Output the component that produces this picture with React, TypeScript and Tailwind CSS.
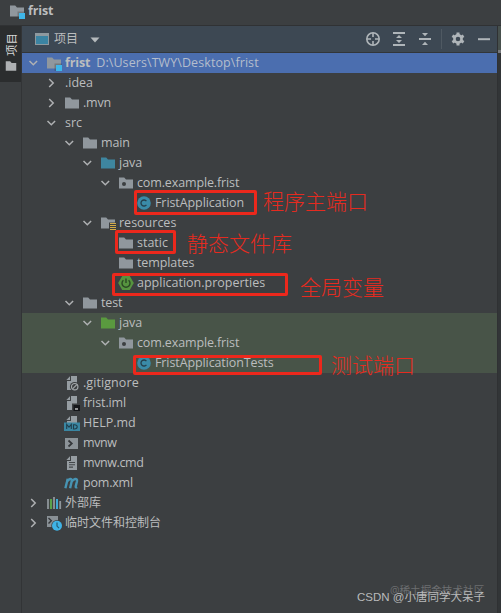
import React from "react";

const folderPath = "M1 2.5h5.2l1.8 2h7v9H1z";

const FolderIcon = ({ color = "#90979d", kind = "" }) => (
  <svg width="16" height="16" viewBox="0 0 16 16">
    <path d={folderPath} fill={color} />
    {kind === "module" && (
      <>
        <path d="M8.5 8.5H16V16H8.5z" fill="#3d4042" fillOpacity=".35" />
        <path d="M10 10h6v6h-6z" fill="#3fb6e8" />
      </>
    )}
    {kind === "package" && <circle cx="6" cy="9" r="2" fill="#3c3f41" />}
    {kind === "resources" && (
      <>
        <path d="M9 7.5h7V16H9z" fill="#3c3f41" />
        <path d="M10 8.5h6M10 10.5h6M10 12.5h6M10 14.5h6" stroke="#d3aa48" strokeWidth="1" />
      </>
    )}
  </svg>
);

const ClassIcon = () => (
  <svg width="16" height="16" viewBox="0 0 16 16">
    <circle cx="8" cy="8" r="6.8" fill="#3a8ba8" />
    <path d="M10.4 9.8a3 3 0 1 1 0-3.6" fill="none" stroke="#243f4b" strokeWidth="1.3" />
  </svg>
);

const SpringIcon = () => (
  <svg width="16" height="16" viewBox="0 0 16 16">
    <path d="M4.2 1h7.6L15.8 8l-4 7H4.2L.2 8z" fill="#56943f" />
    <path d="M5.4 5.2a4 4 0 1 0 5.2 0M8 3.5V8" fill="none" stroke="#2b4824" strokeWidth="1.4" />
  </svg>
);

const FileIcon = ({ kind = "" }) => (
  <svg width="16" height="16" viewBox="0 0 16 16">
    <path d="M7 1h6v14H3V6h4z" fill="#969da2" />
    <path d="M6 1.2V5H2.4z" fill="#969da2" />
    {kind === "ignore" && (
      <>
        <circle cx="10.7" cy="11.7" r="4.8" fill="#3c3f41" />
        <circle cx="10.7" cy="11.7" r="3.2" fill="none" stroke="#a3a8ab" strokeWidth="1.2" />
        <path d="M8.6 13.8l4.2-4.2" stroke="#a3a8ab" strokeWidth="1.2" />
      </>
    )}
    {kind === "iml" && (
      <>
        <path d="M8 8.5h8V16H8z" fill="#3c3f41" />
        <path d="M9.5 10H16v6H9.5z" fill="#15171a" />
        <path d="M11 14h3" stroke="#e5e5e5" strokeWidth="1.2" />
      </>
    )}
    {kind === "md" && (
      <>
        <path d="M0 7.5h16V16H0z" fill="#3a86a2" />
        <path
          d="M2.7 14V9.5L5 12.2l2.3-2.7V14M9.5 9.7V14h1c3.6 0 3.6-4.3 0-4.3z"
          fill="none"
          stroke="#203e4c"
          strokeWidth="1.1"
        />
      </>
    )}
    {kind === "text" && (
      <path d="M5 7.5h6M5 9.8h6M5 12.1h4" stroke="#44484b" strokeWidth="1.1" />
    )}
  </svg>
);

const ShellIcon = () => (
  <svg width="16" height="16" viewBox="0 0 16 16">
    <path d="M1 3h13v11H1z" fill="#8c9398" />
    <path d="M4.5 5.5l3.3 3-3.3 3" fill="none" stroke="#34373a" strokeWidth="1.7" />
  </svg>
);

const MavenIcon = () => (
  <svg width="16" height="16" viewBox="0 0 16 16">
    <path
      d="M1.4 13.2L3.7 3.7M2.9 7C4.4 3.6 8.4 2.8 7.7 6.2L6.1 13.2M7.5 7C9.2 3.6 13.7 2.8 13 6.2l-1.3 5.2c-.3 1.2.5 1.2 1.5.7"
      fill="none"
      stroke="#4794b3"
      strokeWidth="2.4"
    />
  </svg>
);

const LibraryIcon = () => (
  <svg width="16" height="16" viewBox="0 0 16 16">
    <path d="M2 4v10M8 2v12M14.2 6v8" stroke="#8f969b" strokeWidth="1.8" />
    <path d="M5 4v10" stroke="#5ba14a" strokeWidth="2.2" />
    <path d="M11 4v10" stroke="#3ea9d4" strokeWidth="2" />
  </svg>
);

const ScratchIcon = () => (
  <svg width="16" height="16" viewBox="0 0 16 16" overflow="visible">
    <path d="M1 1h11v11H1z" fill="#899095" />
    <path d="M2.5 3l2.8 2.7-2.8 2.7" fill="none" stroke="#34373a" strokeWidth="1.4" />
    <circle cx="11" cy="10.8" r="5.7" fill="#3c3f41" />
    <circle cx="11" cy="10.8" r="5" fill="#3fb3e6" />
    <path d="M11 7.5v3.6l2 2" fill="none" stroke="#245d76" strokeWidth="1.2" />
  </svg>
);

const Chevron = ({ open = false }) => (
  <svg width="16" height="16" viewBox="0 0 16 16" fill="none" stroke="#afb1b3" strokeWidth="1.5">
    {open ? <path d="M4.5 6l3.8 3.8L12.1 6" /> : <path d="M6.2 4l4 4-4 4" />}
  </svg>
);

type Node = {
  name: string;
  depth: number;
  arrow?: "open" | "closed";
  icon?: React.ReactNode;
  bg?: string;
  text?: string;
};

const nodes: Node[] = [
  { name: ".idea", depth: 1, arrow: "closed" },
  { name: ".mvn", depth: 1, arrow: "closed", icon: <FolderIcon />, text: "tracking-[-0.2px]" },
  { name: "src", depth: 1, arrow: "open" },
  { name: "main", depth: 2, arrow: "open", icon: <FolderIcon />, text: "tracking-[-0.1px]" },
  { name: "java", depth: 3, arrow: "open", icon: <FolderIcon color="#3e86a0" /> },
  { name: "com.example.frist", depth: 4, arrow: "open", icon: <FolderIcon kind="package" />, text: "tracking-[-0.13px]" },
  { name: "FristApplication", depth: 5, icon: <ClassIcon />, text: "tracking-[-0.08px]" },
  { name: "resources", depth: 3, arrow: "open", icon: <FolderIcon kind="resources" /> },
  { name: "static", depth: 4, icon: <FolderIcon /> },
  { name: "templates", depth: 4, icon: <FolderIcon />, text: "tracking-[-0.1px]" },
  { name: "application.properties", depth: 4, icon: <SpringIcon /> },
  { name: "test", depth: 2, arrow: "open", icon: <FolderIcon />, text: "tracking-[-0.15px]" },
  { name: "java", depth: 3, arrow: "open", icon: <FolderIcon color="#5a9a3f" />, bg: "bg-[#485448]" },
  {
    name: "com.example.frist",
    depth: 4,
    arrow: "open",
    icon: <FolderIcon kind="package" />,
    bg: "bg-[#485448]",
    text: "tracking-[-0.13px]",
  },
  {
    name: "FristApplicationTests",
    depth: 5,
    icon: <ClassIcon />,
    bg: "bg-[#485448]",
    text: "tracking-[-0.1px]",
  },
  { name: ".gitignore", depth: 2, icon: <FileIcon kind="ignore" />, text: "tracking-[0.08px]" },
  { name: "frist.iml", depth: 2, icon: <FileIcon kind="iml" />, text: "tracking-[-0.1px]" },
  { name: "HELP.md", depth: 2, icon: <FileIcon kind="md" /> },
  { name: "mvnw", depth: 2, icon: <ShellIcon />, text: "tracking-[-0.4px]" },
  { name: "mvnw.cmd", depth: 2, icon: <FileIcon kind="text" />, text: "tracking-[-0.4px]" },
  { name: "pom.xml", depth: 2, icon: <MavenIcon />, text: "tracking-[-0.2px]" },
  { name: "外部库", depth: 0, arrow: "closed", icon: <LibraryIcon />, text: "text-[12px]" },
  { name: "临时文件和控制台", depth: 0, arrow: "closed", icon: <ScratchIcon />, text: "text-[12px]" },
];

const indents = ["pl-[3px]", "pl-[21px]", "pl-[39px]", "pl-[57px]", "pl-[75px]", "pl-[93px]"];

const TreeRow = ({ node }: { node: Node }) => {
  // top level files line up with the folders beside them
  const depth = !node.arrow && node.depth === 2 ? 1 : node.depth;
  return (
    <div className={`flex h-5 items-center ${indents[depth]} ${node.bg ?? ""}`}>
      <span className="w-4 shrink-0">{node.arrow && <Chevron open={node.arrow === "open"} />}</span>
      {node.icon && <span className="ml-[5px] w-4 shrink-0">{node.icon}</span>}
      <span className={`whitespace-nowrap ${node.icon ? "ml-[3px]" : "ml-[6px]"} ${node.text ?? ""}`}>
        {node.name}
      </span>
    </div>
  );
};

const Toolbar = () => (
  <div className="flex h-[27px] items-center border-b border-[#323639] bg-[#3d4853] pl-[12px]">
    <svg width="16" height="16" viewBox="0 0 16 16">
      <path d="M1 2h14v12H1z" fill="#8e999f" />
      <path d="M2 5h12v8H2z" fill="#3b84a3" />
    </svg>
    <span className="ml-[4px] text-[12px]">项目</span>
    <svg className="mt-[2px] ml-[12px]" width="10" height="6" viewBox="0 0 10 6">
      <path d="M.5.5h9L5 5.5z" fill="#b5babd" />
    </svg>
    <div className="ml-auto flex items-center pr-[5px]">
      <svg width="16" height="16" viewBox="0 0 16 16" fill="none" stroke="#afb5b9" strokeWidth="1.6">
        <circle cx="8" cy="8" r="6.2" />
        <path d="M8 2v4M8 10v4M2 8h4M10 8h4" />
      </svg>
      <svg className="ml-[10px]" width="16" height="16" viewBox="0 0 16 16" fill="#afb5b9">
        <path d="M2 1h12v2H2zM2 13h12v2H2zM5 7l3-3 3 3zM5 9h6l-3 3z" />
      </svg>
      <svg className="ml-[10px]" width="16" height="16" viewBox="0 0 16 16" fill="#afb5b9">
        <path d="M2 7h12v2H2zM5 2h6L8 5.3zM5 14l3-3.3 3 3.3z" />
      </svg>
      <span className="ml-[8px] h-5 w-px bg-[#4f5962]" />
      <svg className="ml-[8px]" width="16" height="16" viewBox="0 0 16 16" fill="none" stroke="#afb5b9">
        <circle cx="8" cy="8" r="3.6" strokeWidth="2.6" />
        <path
          d="M8 1.5v3M8 11.5v3M2.4 4.8L5 6.3M11 9.7l2.6 1.5M2.4 11.2L5 9.7M11 6.3l2.6-1.5"
          strokeWidth="3"
        />
      </svg>
      <svg className="ml-[10px]" width="16" height="16" viewBox="0 0 16 16">
        <path d="M2 7.2h12v2H2z" fill="#afb5b9" />
      </svg>
    </div>
  </div>
);

const Annotations = () => (
  <div className="text-[21px] leading-6 font-light whitespace-nowrap text-[#e52b20]">
    <div className="absolute top-[190px] left-[134px] h-[25px] w-[123px] rounded-[2px] border-3 border-[#ec281c]" />
    <div className="absolute top-[189px] left-[263px]">程序主端口</div>
    <div className="absolute top-[230px] left-[115px] h-[24px] w-[61px] rounded-[2px] border-3 border-[#ec281c]" />
    <div className="absolute top-[231px] left-[187px]">静态文件库</div>
    <div className="absolute top-[273px] left-[112px] h-[23px] w-[176px] rounded-[2px] border-3 border-[#ec281c]" />
    <div className="absolute top-[275px] left-[300px]">全局变量</div>
    <div className="absolute top-[355px] left-[133px] h-[20px] w-[189px] rounded-[2px] border-3 border-[#ec281c]" />
    <div className="absolute top-[353px] left-[331px]">测试端口</div>
  </div>
);

const App = () => {
  return (
    <div className="relative flex h-[613px] w-[501px] flex-col overflow-hidden bg-[#3c3f41] font-['Open_Sans','Noto_Sans_CJK_SC',sans-serif] text-[12.5px] leading-5 text-[#bbbdbe]">
      <div className="flex h-[26px] shrink-0 items-center border-b border-[#303234] pb-[4px] pl-[9px]">
        <FolderIcon kind="module" />
        <span className="ml-[3px] font-bold tracking-[-0.15px]">frist</span>
      </div>
      <div className="flex flex-1">
        <div className="w-[22px] border-r border-[#323436]">
          <div className="flex h-[56px] flex-col items-center bg-[#2b2d2e] pt-[6px] pl-[3px] text-[#d5d6d6]">
            <span className="h-[24px] rotate-180 text-[11.5px] leading-4 [text-orientation:sideways] [writing-mode:vertical-rl]">
              项目
            </span>
            <svg className="mt-[3px] mr-[2px]" width="14" height="14" viewBox="0 0 16 16">
              <path d="M2 2.5h5l1.8 2H14v9H2z" fill="#afb1b3" />
            </svg>
          </div>
        </div>
        <div className="flex flex-1 flex-col">
          <Toolbar />
          <div className="flex h-5 items-center bg-[#4b6eaf] pl-[3px]">
            <Chevron open />
            <span className="ml-[5px]">
              <FolderIcon kind="module" />
            </span>
            <span className="ml-[3px] font-bold tracking-[-0.15px]">frist</span>
            <span className="ml-[6px] tracking-[0.08px] text-[#b4bdcc]">D:\Users\TWY\Desktop\frist</span>
          </div>
          {nodes.map((node, i) => (
            <TreeRow key={i} node={node} />
          ))}
        </div>
        <div className="w-[4px] border-l border-[#2f3133] bg-[#323537]">
          <div className="h-[24px] bg-[#47504d]" />
          <div className="h-[3px] bg-[#77797d]" />
        </div>
      </div>
      <Annotations />
      <div className="absolute top-[580px] left-[390px] text-[10.6px] whitespace-nowrap text-[#6c6e70]">
        @稀土掘金技术社区
      </div>
      <div className="absolute top-[587px] left-[357px] font-['Liberation_Sans','Noto_Sans_CJK_SC',sans-serif] text-[11.5px] whitespace-nowrap text-[#b9babb]">
        CSDN @小唐同学大呆子
      </div>
    </div>
  );
};

export default App;
